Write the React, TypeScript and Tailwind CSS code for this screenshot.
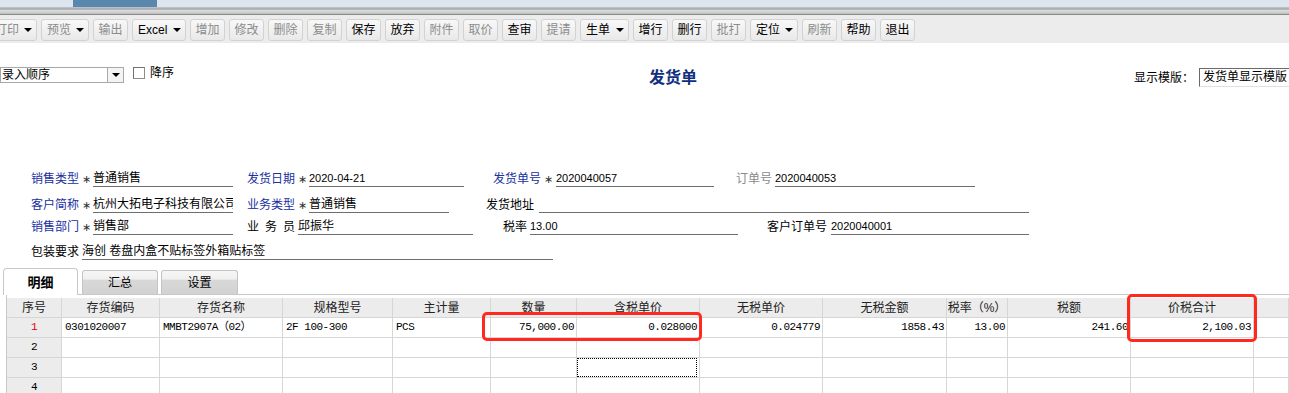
import React from 'react';

type Btn = { label: string; w: string; on?: boolean; dd?: boolean };

const BUTTONS: Btn[] = [
  { label: '打印', w: 'w-[48px]', dd: true },
  { label: '预览', w: 'w-[48px]', dd: true },
  { label: '输出', w: 'w-[35px]' },
  { label: 'Excel', w: 'w-[54px]', dd: true, on: true },
  { label: '增加', w: 'w-[35px]' },
  { label: '修改', w: 'w-[35px]' },
  { label: '删除', w: 'w-[35px]' },
  { label: '复制', w: 'w-[35px]' },
  { label: '保存', w: 'w-[35px]', on: true },
  { label: '放弃', w: 'w-[35px]', on: true },
  { label: '附件', w: 'w-[35px]' },
  { label: '取价', w: 'w-[35px]' },
  { label: '查审', w: 'w-[35px]', on: true },
  { label: '提请', w: 'w-[35px]' },
  { label: '生单', w: 'w-[49px]', dd: true, on: true },
  { label: '增行', w: 'w-[35px]', on: true },
  { label: '删行', w: 'w-[35px]', on: true },
  { label: '批打', w: 'w-[35px]' },
  { label: '定位', w: 'w-[48px]', dd: true, on: true },
  { label: '刷新', w: 'w-[35px]' },
  { label: '帮助', w: 'w-[35px]', on: true },
  { label: '退出', w: 'w-[35px]', on: true },
];

const HEADERS = ['序号', '存货编码', '存货名称', '规格型号', '主计量', '数量', '含税单价', '无税单价', '无税金额', '税率（%）', '税额', '价税合计', ''];

// l = left, r = right, c = centre
const ALIGN = ['c', 'l', 'l', 'l', 'l', 'r', 'r', 'r', 'r', 'r', 'r', 'r', 'l'];

const ROWS: string[][] = [
  ['1', '0301020007', 'MMBT2907A（02）', '2F 100-300', 'PCS', '75,000.00', '0.028000', '0.024779', '1858.43', '13.00', '241.60', '2,100.03', ''],
  ['2', '', '', '', '', '', '', '', '', '', '', '', ''],
  ['3', '', '', '', '', '', '', '', '', '', '', '', ''],
  ['4', '', '', '', '', '', '', '', '', '', '', '', ''],
];

const Arrow = () => (
  <span className="w-0 h-0 border-l-[4px] border-r-[4px] border-t-[4px] border-l-transparent border-r-transparent border-t-black" />
);

const ToolButton: React.FC<{ b: Btn }> = ({ b }) => (
  <div
    className={`${b.w} h-[22px] shrink-0 flex items-center ${b.dd ? 'justify-between pl-[5px] pr-[4px]' : 'justify-center'} rounded-[3px] border border-[#d2d2d2] bg-gradient-to-b from-[#f8f8f8] to-[#e9e9e9] text-[12px] whitespace-nowrap ${b.on ? 'text-black' : 'text-[#8c8c8c]'}`}
  >
    <span>{b.label}</span>
    {b.dd && <Arrow />}
  </div>
);

const Label: React.FC<{ text: string; w: string; blue?: boolean; grey?: boolean }> = ({ text, w, blue, grey }) => (
  <span className={`${w} h-[16px] leading-[16px] shrink-0 text-[12px] whitespace-nowrap ${blue ? 'text-[#2030a0]' : grey ? 'text-[#8a8a8a]' : 'text-black'}`}>
    {text}
  </span>
);

const Star = ({ w }: { w: string }) => (
  <span className={`${w} h-[16px] leading-[16px] shrink-0 text-center text-[11px] text-[#333]`}>∗</span>
);

const Line: React.FC<{ w: string; value?: string; mono?: boolean }> = ({ w, value, mono }) => (
  <div
    className={`${w} h-[16px] shrink-0 border-b border-[#6e6e6e] overflow-hidden whitespace-nowrap leading-[14px] ${mono ? 'text-[11px]' : 'text-[12px]'} text-black`}
  >
    {value}
  </div>
);

export default function App() {
  return (
    <div className="relative w-[1289px] h-[393px] overflow-hidden bg-white font-['Liberation_Sans','Noto_Sans_CJK_SC',sans-serif]">
      {/* window strip */}
      <div className="h-[7px] bg-[#dde6ee] flex">
        <div className="ml-[73px] w-[84px] h-full bg-[#5a87ad]" />
      </div>
      <div className="h-[8px] bg-[linear-gradient(#c3c9cf,#a3a7ab_25%,#dcdcdc_45%,#c6c6c6_80%,#6f6f6f)]" />

      {/* toolbar */}
      <div className="h-[28px] bg-[#ececec] pt-[4px]">
        <div className="-ml-[11px] flex gap-[4px]">
          {BUTTONS.map((b) => (
            <ToolButton key={b.label} b={b} />
          ))}
        </div>
      </div>

      {/* sort + title */}
      <div className="mt-[23px] h-[22px] flex items-start whitespace-nowrap">
        <div className="mt-[1px] w-[124px] h-[16px] shrink-0 flex border border-[#a8a8a8] bg-white">
          <span className="flex-1 text-[12px] leading-[14px] pl-[1px]">录入顺序</span>
          <div className="w-[16px] h-full border-l border-[#a8a8a8] bg-[#f4f4f4] flex items-center justify-center">
            <Arrow />
          </div>
        </div>
        <div className="ml-[9px] mt-[1px] w-[12px] h-[12px] shrink-0 border border-[#8c8c8c] border-t-[#707070] border-l-[#707070] bg-white" />
        <span className="ml-[5px] w-[26px] shrink-0 text-[12px] leading-[14px]">降序</span>
        <span className="ml-[473px] mt-[3px] w-[50px] shrink-0 text-[16px] leading-[18px] font-bold text-[#12307f]">发货单</span>
        <span className="ml-[435px] mt-[5px] w-[60px] shrink-0 text-[12px] leading-[14px]">显示模版：</span>
        <div className="ml-[5px] mt-[2px] w-[100px] h-[19px] shrink-0 border-l border-t border-[#6a6a6a] border-b border-b-[#e0e0e0] pl-[3px] text-[12px] leading-[17px] whitespace-nowrap">
          发货单显示模版
        </div>
      </div>

      {/* form */}
      <div className="mt-[82px] pl-[31px] text-[12px]">
        <div className="h-[17px] flex items-end">
          <Label text="销售类型" w="w-[48px]" blue />
          <Star w="w-[14px]" />
          <Line w="w-[140px]" value="普通销售" />
          <Label text="发货日期" w="w-[48px] ml-[14px]" blue />
          <Star w="w-[14px]" />
          <Line w="w-[155px]" value="2020-04-21" mono />
          <Label text="发货单号" w="w-[48px] ml-[29px]" blue />
          <Star w="w-[15px]" />
          <Line w="w-[158px]" value="2020040057" mono />
          <Label text="订单号" w="w-[36px] ml-[22px]" grey />
          <Line w="w-[200px] ml-[3px]" value="2020040053" mono />
        </div>
        <div className="h-[26px] flex items-end">
          <Label text="客户简称" w="w-[48px]" blue />
          <Star w="w-[14px]" />
          <Line w="w-[140px]" value="杭州大拓电子科技有限公司" />
          <Label text="业务类型" w="w-[48px] ml-[14px]" blue />
          <Star w="w-[14px]" />
          <Line w="w-[140px]" value="普通销售" />
          <Label text="发货地址" w="w-[48px] ml-[37px]" />
          <Line w="w-[490px] ml-[5px]" />
        </div>
        <div className="h-[22px] flex items-end">
          <Label text="销售部门" w="w-[48px]" blue />
          <Star w="w-[14px]" />
          <Line w="w-[140px]" value="销售部" />
          <span className="ml-[14px] w-[48px] h-[16px] leading-[16px] shrink-0 flex justify-between text-[12px]">
            <span>业</span>
            <span>务</span>
            <span>员</span>
          </span>
          <Line w="w-[175px] ml-[3px]" value="邱振华" />
          <Label text="税率" w="w-[24px] ml-[30px]" />
          <Line w="w-[208px] ml-[3px]" value="13.00" mono />
          <Label text="客户订单号" w="w-[60px] ml-[29px]" />
          <Line w="w-[198px] ml-[4px]" value="2020040001" mono />
        </div>
        <div className="h-[25px] flex items-end">
          <Label text="包装要求" w="w-[48px]" />
          <Line w="w-[471px] ml-[3px]" value="海创 卷盘内盒不贴标签外箱贴标签" />
        </div>
      </div>

      {/* tabs */}
      <div className="mt-[7px] h-[27px] flex items-end pl-[3px]">
        <div className="relative z-10 w-[75px] h-[27px] -mb-px bg-white border border-b-0 border-[#c8c8c8] rounded-t-[4px] flex justify-center pt-[4px] text-[13px] font-bold">
          明细
        </div>
        <div className="ml-[4px] w-[76px] h-[24px] border border-b-0 border-[#c4c4c4] rounded-t-[3px] bg-[linear-gradient(#f6f6f6,#f0f0f0_35%,#d8d8d8_40%,#d2d2d2)] flex justify-center pt-[5px] text-[12px] leading-[14px]">
          汇总
        </div>
        <div className="ml-[3px] w-[77px] h-[24px] border border-b-0 border-[#c4c4c4] rounded-t-[3px] bg-[linear-gradient(#f6f6f6,#f0f0f0_35%,#d8d8d8_40%,#d2d2d2)] flex justify-center pt-[5px] text-[12px] leading-[14px]">
          设置
        </div>
      </div>

      {/* grid panel */}
      <div className="ml-[6px] border-t border-l border-[#c8c8c8] pt-[3px]">
        <div className="grid grid-cols-[55px_98px_123px_110px_98px_86px_123px_123px_124px_61px_123px_123px_1fr]">
          {HEADERS.map((h, i) => (
            <div
              key={`h${i}`}
              className="h-[20px] bg-[#ececec] border-r border-b border-[#d6d6d6] flex items-center justify-center text-[12px] text-[#222] whitespace-nowrap"
            >
              {h}
            </div>
          ))}
          {ROWS.map((row, r) =>
            row.map((v, i) => {
              const a = ALIGN[i];
              const isIdx = i === 0;
              const focus = r === 2 && i === 6;
              return (
                <div
                  key={`${r}-${i}`}
                  className={`h-[20px] border-r border-b border-[#d6d6d6] flex items-center whitespace-nowrap overflow-hidden font-['Liberation_Mono','Noto_Sans_CJK_SC',monospace] text-[11px] tracking-[-0.5px] ${
                    isIdx ? 'bg-[#ececec]' : 'bg-white'
                  } ${a === 'c' ? 'justify-center' : a === 'r' ? 'justify-end pr-[2px]' : 'justify-start pl-[3px]'} ${
                    isIdx && r === 0 ? 'text-[#e00000]' : 'text-black'
                  }`}
                >
                  {focus ? <div className="w-full h-full border border-dotted border-black" /> : v}
                </div>
              );
            })
          )}
        </div>
      </div>

      {/* red annotation boxes */}
      <div className="pointer-events-none absolute left-[482px] top-[312px] w-[220px] h-[29px] border-[3px] border-[#ff2a1f] rounded-[5px]" />
      <div className="pointer-events-none absolute left-[1127px] top-[294px] w-[130px] h-[48px] border-[3px] border-[#ff2a1f] rounded-[5px]" />
    </div>
  );
}
